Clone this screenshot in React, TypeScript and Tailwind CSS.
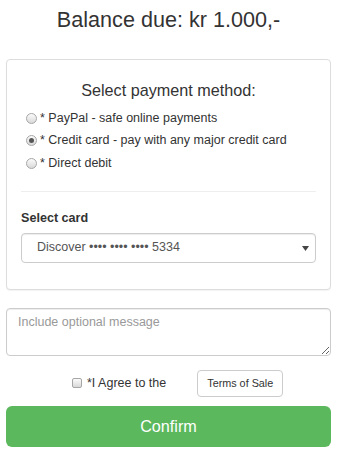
import { useState } from 'react';

const methods = [
  { id: 'paypal', label: '* PayPal - safe online payments' },
  { id: 'card', label: '* Credit card - pay with any major credit card' },
  { id: 'debit', label: '* Direct debit' },
];

function Radio({ checked }: { checked: boolean }) {
  return (
    <span className="flex h-[11px] w-[11px] shrink-0 items-center justify-center rounded-full border border-[#a6a6a6] bg-gradient-to-b from-[#fbfbfb] to-[#d9d9d9]">
      {checked && <span className="h-[5px] w-[5px] rounded-full bg-[#555]" />}
    </span>
  );
}

export default function App() {
  const [method, setMethod] = useState('card');
  const [agreed, setAgreed] = useState(false);

  return (
    <div className="w-[337px] px-[6px] font-['Liberation_Sans',Arial,sans-serif] text-[#333]">
      <h3 className="pt-[8px] text-center text-[21.6px] leading-[24px]">Balance due: kr 1.000,-</h3>

      <div className="mt-[27px] rounded-[4px] border border-[#ddd] bg-white px-[14px] pt-[21px] pb-[26px] shadow-[0_1px_1px_rgba(0,0,0,0.05)]">
        <h4 className="text-center text-[16.2px] leading-[18px]">Select payment method:</h4>
        <div className="mt-[8px]">
          {methods.map((m) => (
            <label
              key={m.id}
              onClick={() => setMethod(m.id)}
              className="flex h-[22.5px] cursor-pointer items-center gap-[3px] pl-[5px] text-[12.5px]"
            >
              <Radio checked={method === m.id} />
              <span>{m.label}</span>
            </label>
          ))}
        </div>

        <div className="mt-[16px] border-t border-[#eee]" />

        <div className="mt-[17px] text-[12.6px] leading-[18px] font-bold">Select card</div>
        <div className="mt-[6px] flex h-[30px] items-center justify-between rounded-[4px] border border-[#ccc] bg-white pl-[15px] pr-[6px] text-[12.5px] text-[#555] shadow-[inset_0_1px_1px_rgba(0,0,0,0.075)]">
          <span>Discover •••• •••• •••• 5334</span>
          <svg width="7" height="5" viewBox="0 0 7 5" className="mt-[1px]">
            <path d="M0 0h7L3.5 5z" fill="#444" />
          </svg>
        </div>
      </div>

      <textarea
        placeholder="Include optional message"
        className="mt-[18px] block h-[48px] w-full rounded-[4px] border border-[#ccc] px-[11px] py-[5px] text-[12.5px] leading-[17px] text-[#555] shadow-[inset_0_1px_1px_rgba(0,0,0,0.075)] outline-none placeholder:text-[#999]"
      />

      <div className="mt-[14px] flex h-[27px] items-center pl-[66px]">
        <label className="flex cursor-pointer items-center gap-[5px] text-[12.5px]" onClick={() => setAgreed(!agreed)}>
          <span className="flex h-[10px] w-[10px] items-center justify-center rounded-[2px] border border-[#a6a6a6] bg-gradient-to-b from-[#fbfbfb] to-[#d9d9d9] text-[8px] leading-none">
            {agreed ? '✓' : ''}
          </span>
          <span>*I Agree to the</span>
        </label>
        <button className="ml-[31px] h-[27px] rounded-[4px] border border-[#ccc] bg-white px-[9px] text-[10.8px] text-[#333]">
          Terms of Sale
        </button>
      </div>

      <button className="mt-[9px] h-[41px] w-full rounded-[6px] bg-[#5cb85c] text-[16.2px] text-white">
        Confirm
      </button>
    </div>
  );
}
